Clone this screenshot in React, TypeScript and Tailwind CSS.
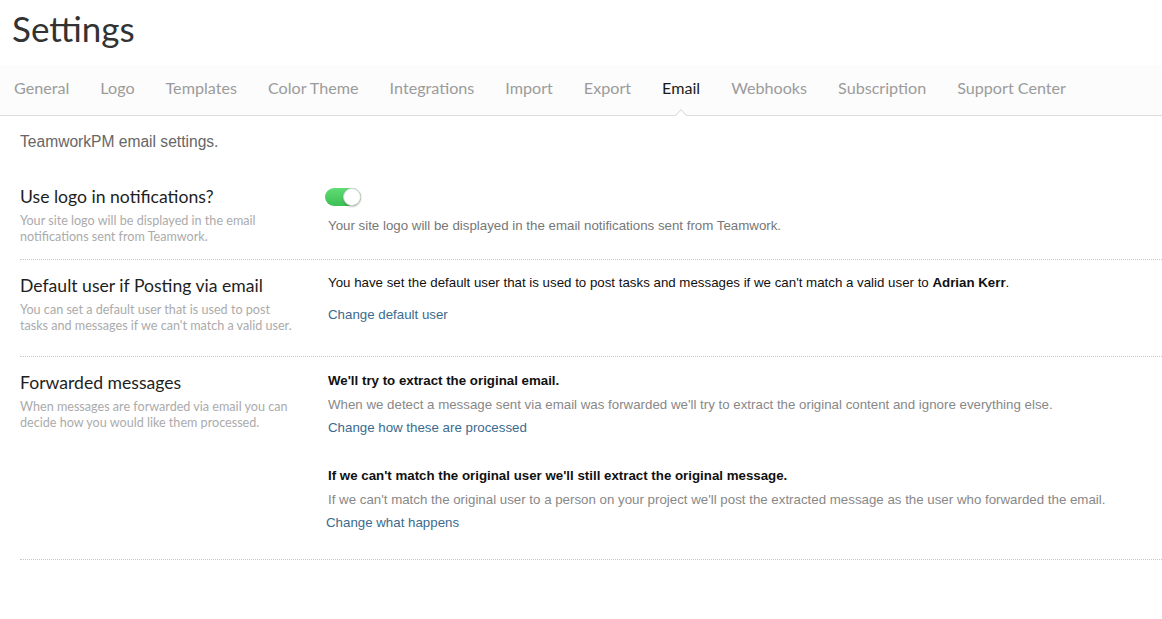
import { ReactNode } from 'react';

const tabs = ['General', 'Logo', 'Templates', 'Color Theme', 'Integrations', 'Import', 'Export', 'Email', 'Webhooks', 'Subscription', 'Support Center'];

const heading = { fontFamily: 'Lato, "Open Sans", sans-serif' };
const body = { fontFamily: '"Liberation Sans", Arial, sans-serif' };

interface RowProps {
  title: string;
  desc: string;
  className: string;
  children: ReactNode;
}

const SettingRow = ({ title, desc, className, children }: RowProps) => (
  <div className={`flex border-b border-dotted border-[#c8c8c8] ${className}`}>
    <div className="w-[308px] shrink-0 pr-[8px]" style={heading}>
      <h3 className="text-[17.6px] leading-[20px] text-[#1e1e1e]">{title}</h3>
      <p className="mt-[6px] whitespace-pre-line text-[12.6px] leading-[15.5px] text-[#ababab]">{desc}</p>
    </div>
    <div className="flex-1" style={body}>
      {children}
    </div>
  </div>
);

const Toggle = () => (
  <div className="relative w-[36px] h-[18px] rounded-full bg-gradient-to-b from-[#5fdc74] to-[#3cbf55]">
    <div className="absolute right-0 top-0 w-[18px] h-[18px] rounded-full bg-white border border-[#d5d5d5] shadow-[0_1px_2px_rgba(0,0,0,0.25)]" />
  </div>
);

const App = () => {
  return (
    <div className="w-[1162px] h-[619px] bg-white overflow-hidden">
      {/* Title */}
      <div className="h-[65px] pl-[12px] pt-[7px]">
        <h1 className="text-[35px] leading-[42px] text-[#333]" style={heading}>
          Settings
        </h1>
      </div>

      {/* Tabs */}
      <div className="h-[51px] bg-[#fcfcfc] border-b border-[#dcdcdc] flex" style={heading}>
        {tabs.map((tab) => (
          <div
            key={tab}
            className={`relative h-full flex items-center pb-[4px] px-[15.5px] first:pl-[14px] text-[16.15px] ${
              tab === 'Email' ? 'text-[#1a1a1a]' : 'text-[#9b9b9b]'
            }`}
          >
            {tab}
            {tab === 'Email' && (
              <span className="absolute left-1/2 -translate-x-1/2 bottom-[-5px] w-[9px] h-[9px] rotate-45 bg-white border-l border-t border-[#dcdcdc] z-10" />
            )}
          </div>
        ))}
      </div>

      {/* Content */}
      <div className="pl-[20px]">
        <p className="mt-[16px] text-[15.6px] leading-[20px] text-[#666]" style={body}>
          TeamworkPM email settings.
        </p>

        <div className="mt-[18px]">
          <SettingRow
            title="Use logo in notifications?"
            desc={'Your site logo will be displayed in the email\nnotifications sent from Teamwork.'}
            className="pt-[17px] pb-[15px]"
          >
            <div className="pt-[1px] -ml-[3px]">
              <Toggle />
            </div>
            <p className="mt-[11px] text-[13.3px] leading-[18px] text-[#777]">
              Your site logo will be displayed in the email notifications sent from Teamwork.
            </p>
          </SettingRow>

          <SettingRow
            title="Default user if Posting via email"
            desc={"You can set a default user that is used to post\ntasks and messages if we can't match a valid user."}
            className="pt-[16px] pb-[23px]"
          >
            <p className="-mt-[2px] text-[13.3px] leading-[18px] text-[#111]">
              You have set the default user that is used to post tasks and messages if we can't match a valid user to{' '}
              <strong className="font-bold">Adrian Kerr</strong>.
            </p>
            <a className="block mt-[14px] text-[13.3px] leading-[18px] text-[#3b6b8e]">Change default user</a>
          </SettingRow>

          <SettingRow
            title="Forwarded messages"
            desc={'When messages are forwarded via email you can\ndecide how you would like them processed.'}
            className="pt-[16px] pb-[27px]"
          >
            <div className="-mt-[1px]">
              <p className="text-[13.3px] leading-[18px] font-bold text-[#111]">We'll try to extract the original email.</p>
              <p className="mt-[6px] text-[13.3px] leading-[18px] text-[#888]">
                When we detect a message sent via email was forwarded we'll try to extract the original content and ignore everything else.
              </p>
              <a className="block mt-[5px] text-[13.3px] leading-[18px] text-[#3b6b8e]">Change how these are processed</a>

              <p className="mt-[30px] text-[13.3px] leading-[18px] font-bold text-[#111]">
                If we can't match the original user we'll still extract the original message.
              </p>
              <p className="mt-[6px] text-[13.3px] leading-[18px] text-[#888]">
                If we can't match the original user to a person on your project we'll post the extracted message as the user who forwarded the email.
              </p>
              <a className="block mt-[5px] -ml-[2px] text-[13.3px] leading-[18px] text-[#3b6b8e]">Change what happens</a>
            </div>
          </SettingRow>
        </div>
      </div>
    </div>
  );
};

export default App;
